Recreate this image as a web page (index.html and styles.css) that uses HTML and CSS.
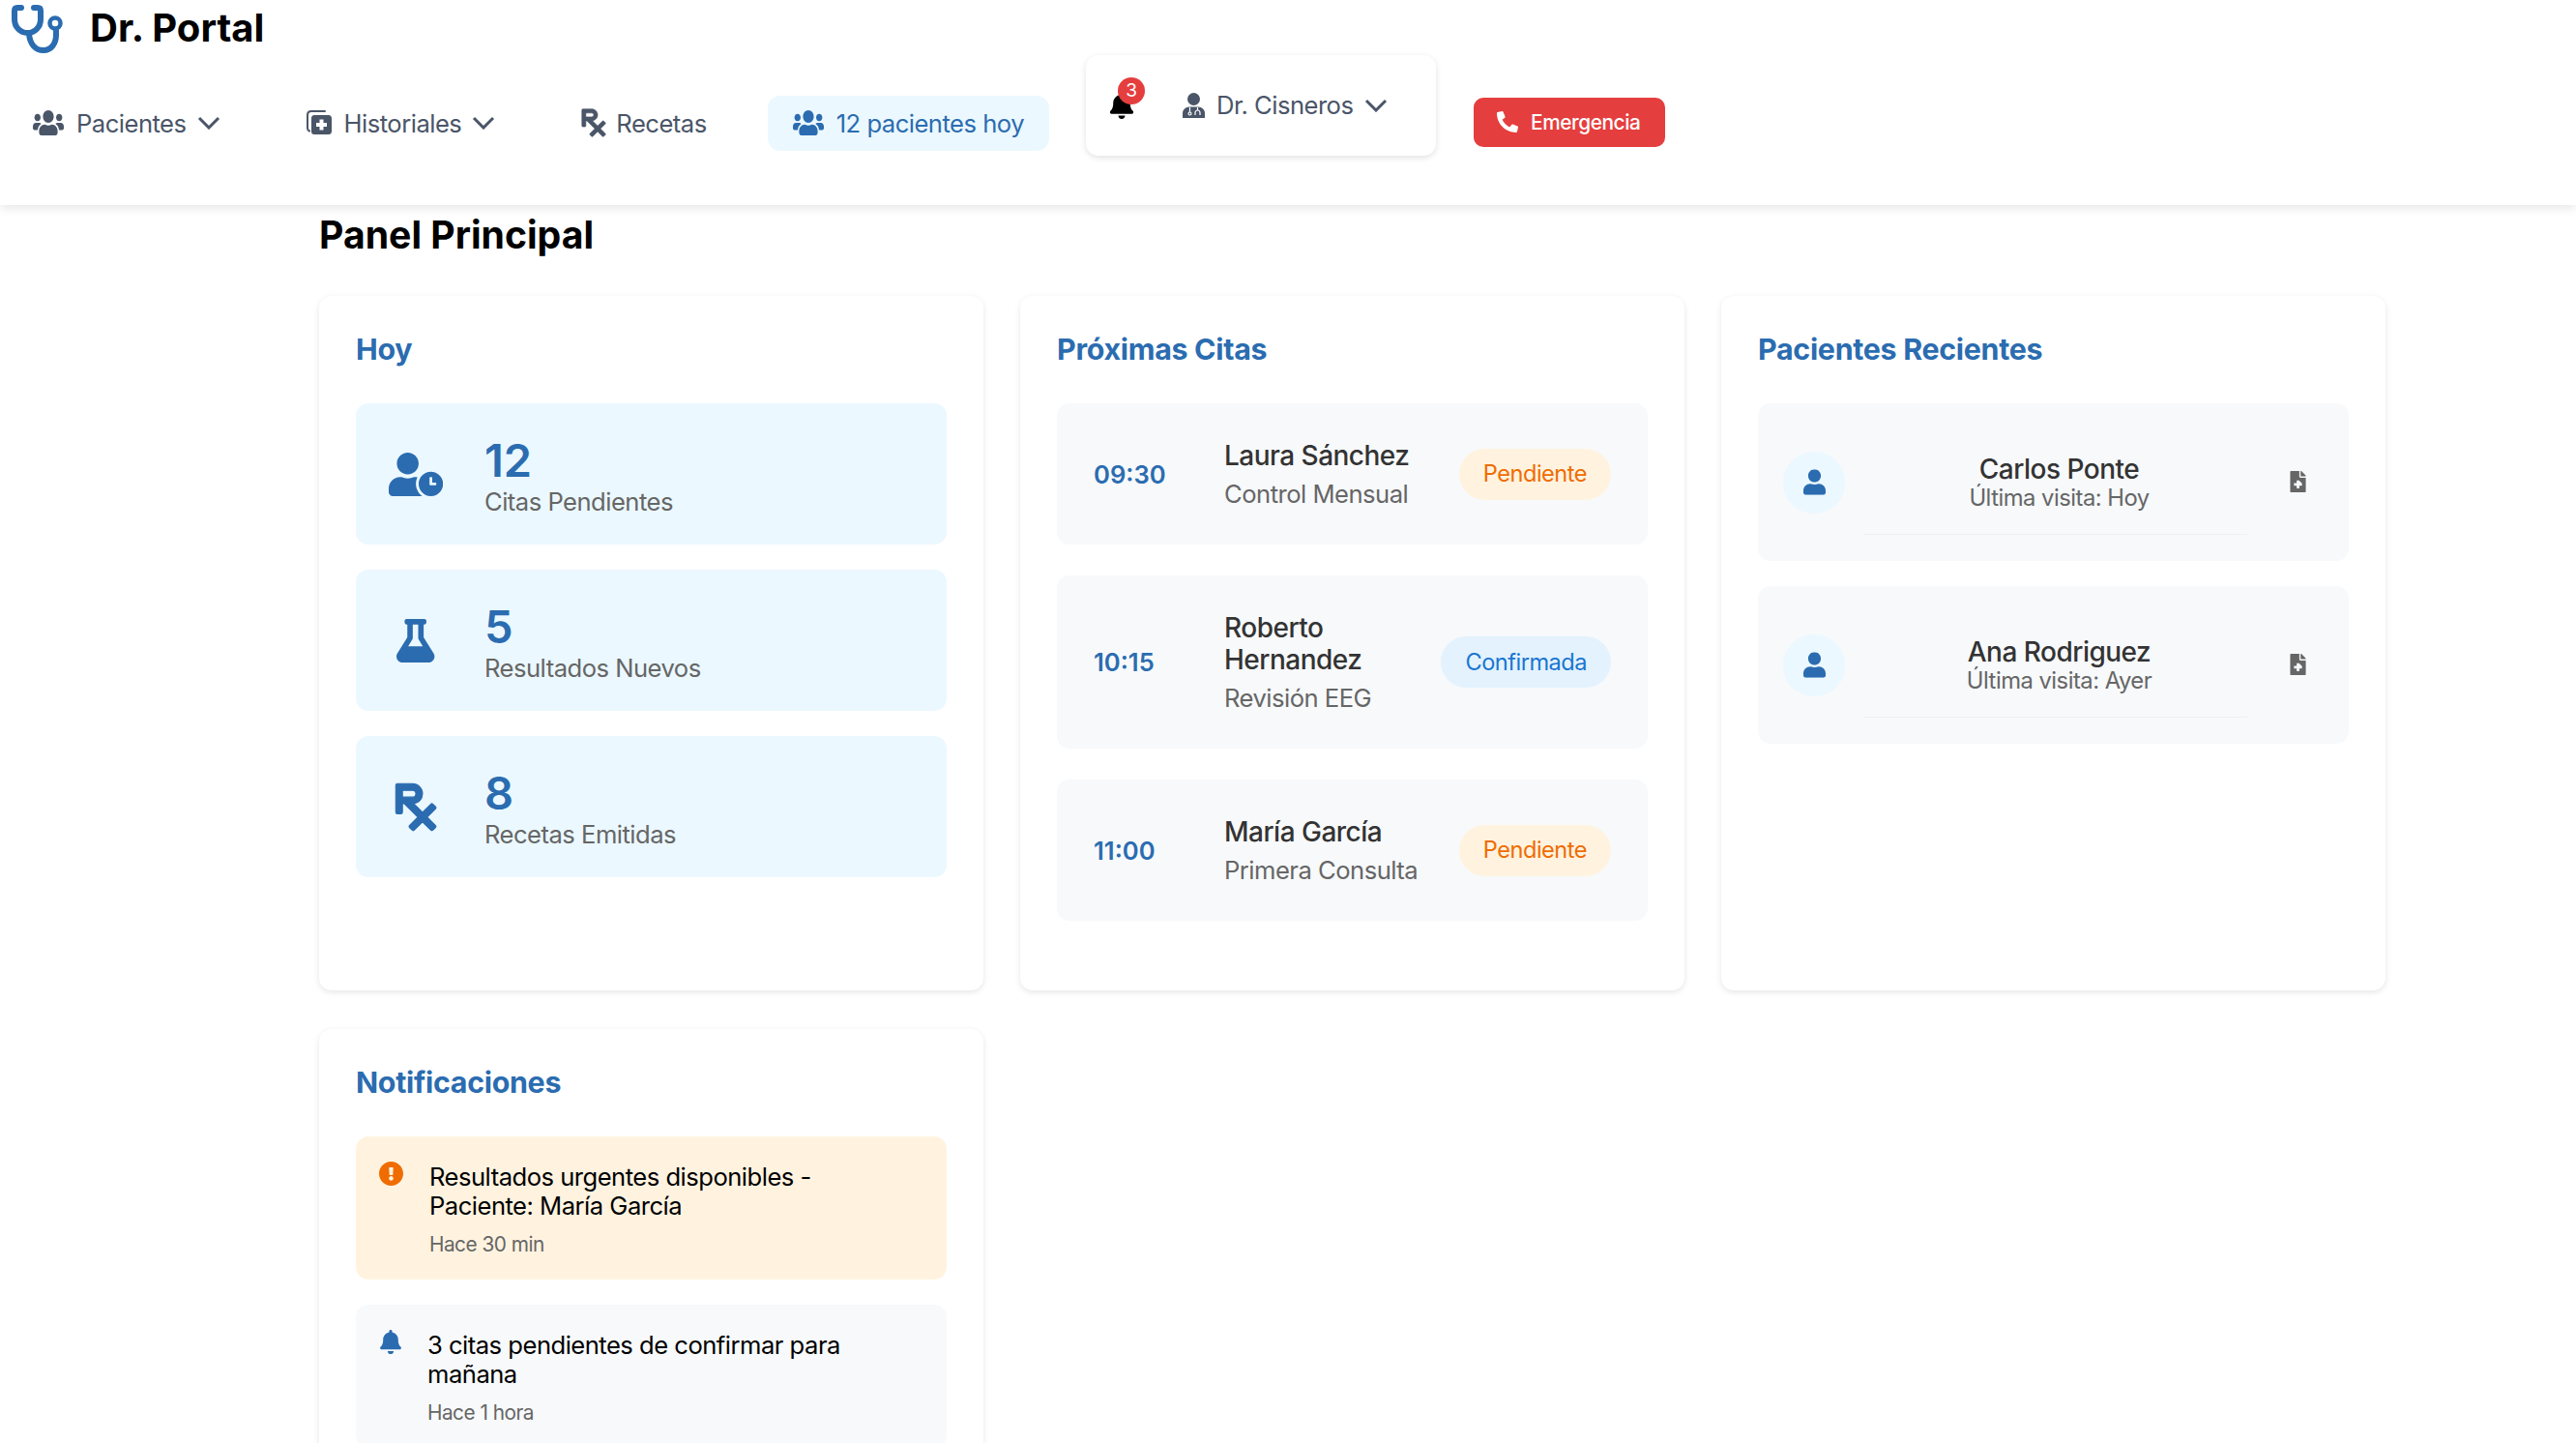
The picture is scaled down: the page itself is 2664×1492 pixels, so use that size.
FILE: index.html
```html
<!DOCTYPE html>
<html lang="es">
<head>
    <meta charset="UTF-8">
    <meta name="viewport" content="width=device-width, initial-scale=1.0">
    <title>Dr. Portal</title>
    <link rel="stylesheet" href="styles.css">
</head>
<body>
    <header class="header">
        <div class="logo">
            <svg class="logo-icon" viewBox="0 0 53 54" fill="none" stroke="#2b6cb0" stroke-width="6" stroke-linecap="round" stroke-linejoin="round">
                <path d="M10 6H6C4 6 3 7 3 9V18C3 26 9 32 16.500 32C24 32 30 26 30 18V9C30 7 29 6 27 6H23"/>
                <path d="M18 33C19 44 25 50 33 50C41 50 46 43 46 34V30"/>
                <circle cx="45" cy="22" r="5.500" stroke-width="4.500"/>
            </svg>
            <span class="logo-text">Dr. Portal</span>
        </div>
        <nav class="nav">
            <a class="nav-item">
                <svg class="icon nav-icon-wide" viewBox="0 32 640 448" preserveAspectRatio="none"><use href="#i-users" width="640" height="512"/></svg>
                <span>Pacientes</span>
                <svg class="chevron" viewBox="0 0 24 14"><polyline points="2,2 12,12 22,2"/></svg>
            </a>
            <a class="nav-item">
                <svg class="icon nav-icon" viewBox="0 0 26 26">
                    <path d="M3 21.500C2 21 1 20 1 18.500V5C1 2.500 2.500 1 5 1H19" fill="none" stroke="currentColor" stroke-width="2" stroke-linecap="round"/>
                    <path d="M8 5H23C24.500 5 26 6.500 26 8V22C26 24 24.500 25 23 25H8C6 25 5 24 5 22V8C5 6.500 6 5 8 5ZM13.500 9.500V13H10V17H13.500V20.500H17.500V17H21V13H17.500V9.500Z" fill-rule="evenodd"/>
                </svg>
                <span>Historiales</span>
                <svg class="chevron" viewBox="0 0 24 14"><polyline points="2,2 12,12 22,2"/></svg>
            </a>
            <a class="nav-item nav-item-rx">
                <svg class="icon nav-rx rx-icon" viewBox="-12 20 408 472"><use href="#i-rx" width="384" height="512"/></svg>
                <span>Recetas</span>
            </a>
            <a class="nav-item active">
                <svg class="icon nav-icon-wide" viewBox="0 32 640 448" preserveAspectRatio="none"><use href="#i-users" width="640" height="512"/></svg>
                <span>12 pacientes hoy</span>
            </a>
            <div class="user-box">
                <div class="bell">
                    <svg class="icon bell-icon" viewBox="0 0 448 512"><use href="#i-bell" width="448" height="512"/></svg>
                    <span class="bell-count">3</span>
                </div>
                <svg class="icon doctor-icon" viewBox="0 0 23 26">
                    <circle cx="11.500" cy="6.500" r="6.500"/>
                    <path d="M0 26V21C0 17.500 3 14.500 7 14.500H16C20 14.500 23 17.500 23 21V26Z"/>
                    <path d="M7.500 15V20M15.500 15V18" fill="none" stroke="#fff" stroke-width="1.200"/>
                    <circle cx="7.500" cy="21.500" r="1.500" fill="none" stroke="#fff" stroke-width="1.200"/>
                    <path d="M13 23V20.500C13 19 14.500 18 15.500 18C16.500 18 18 19 18 20.500V23" fill="none" stroke="#fff" stroke-width="1.200"/>
                </svg>
                <span class="user-name">Dr. Cisneros</span>
                <svg class="chevron" viewBox="0 0 24 14"><polyline points="2,2 12,12 22,2"/></svg>
            </div>
            <button class="emergency">
                <svg class="icon phone-icon" viewBox="0 0 512 512">
                    <path d="M497.390 361.800l-112-48a24 24 0 0 0-28 6.900l-49.600 60.600A370.660 370.660 0 0 1 130.600 204.110l60.600-49.600a23.940 23.940 0 0 0 6.900-28l-48-112A24.160 24.160 0 0 0 122.600.610l-104 24A24 24 0 0 0 0 48c0 256.500 207.900 464 464 464a24 24 0 0 0 23.400-18.600l24-104a24.290 24.290 0 0 0-14.010-27.600z"/>
                </svg>
                Emergencia
            </button>
        </nav>
    </header>

    <main class="main">
        <h2 class="page-title">Panel Principal</h2>
        <div class="grid">
            <section class="card">
                <h3>Hoy</h3>
                <div class="stat">
                    <div class="stat-icon"><svg class="icon" viewBox="0 0 640 512"><path d="M496 224c-79.600 0-144 64.400-144 144s64.400 144 144 144 144-64.400 144-144-64.400-144-144-144zm64 150.300c0 5.300-4.400 9.700-9.700 9.700h-60.600c-5.300 0-9.700-4.400-9.700-9.700v-76.600c0-5.300 4.400-9.700 9.700-9.700h12.600c5.300 0 9.700 4.400 9.700 9.700V352h38.300c5.300 0 9.700 4.400 9.700 9.700v12.600zM320 368c0-27.800 6.700-54.100 18.200-77.500-8-1.500-16.200-2.500-24.600-2.500h-16.700c-22.200 10.200-46.900 16-72.900 16s-50.600-5.800-72.900-16h-16.700C60.200 288 0 348.200 0 422.400V464c0 26.500 21.500 48 48 48h347.100c-45.300-31.900-75.100-84.500-75.100-144zm-96-112c70.700 0 128-57.300 128-128S294.700 0 224 0 96 57.300 96 128s57.300 128 128 128z"/></svg></div>
                    <div>
                        <div class="stat-num">12</div>
                        <div class="stat-label">Citas Pendientes</div>
                    </div>
                </div>
                <div class="stat">
                    <div class="stat-icon"><svg class="icon" viewBox="0 0 448 512"><path d="M437.200 403.500L320 215V64h8c13.300 0 24-10.700 24-24V24c0-13.300-10.700-24-24-24H120c-13.300 0-24 10.700-24 24v16c0 13.300 10.700 24 24 24h8v151L10.800 403.500C-18.500 450.600 15.300 512 70.900 512h306.200c55.700 0 89.400-61.500 60.100-108.500zM137.900 320l48.200-77.600c3.700-5.200 5.800-11.600 5.800-18.400V64h64v160c0 6.900 2.200 13.200 5.800 18.400l48.200 77.600h-172z"/></svg></div>
                    <div>
                        <div class="stat-num">5</div>
                        <div class="stat-label">Resultados Nuevos</div>
                    </div>
                </div>
                <div class="stat">
                    <div class="stat-icon"><svg class="icon rx-icon" viewBox="-12 20 408 472"><use href="#i-rx" width="384" height="512"/></svg></div>
                    <div>
                        <div class="stat-num">8</div>
                        <div class="stat-label">Recetas Emitidas</div>
                    </div>
                </div>
            </section>

            <section class="card">
                <h3>Próximas Citas</h3>
                <div class="appt">
                    <div class="appt-time">09:30</div>
                    <div class="appt-info">
                        <div class="appt-name">Laura Sánchez</div>
                        <div class="appt-type">Control Mensual</div>
                    </div>
                    <span class="badge pending">Pendiente</span>
                </div>
                <div class="appt">
                    <div class="appt-time">10:15</div>
                    <div class="appt-info">
                        <div class="appt-name">Roberto Hernandez</div>
                        <div class="appt-type">Revisión EEG</div>
                    </div>
                    <span class="badge confirmed">Confirmada</span>
                </div>
                <div class="appt">
                    <div class="appt-time">11:00</div>
                    <div class="appt-info">
                        <div class="appt-name">María García</div>
                        <div class="appt-type">Primera Consulta</div>
                    </div>
                    <span class="badge pending">Pendiente</span>
                </div>
            </section>

            <section class="card">
                <h3>Pacientes Recientes</h3>
                <div class="patient">
                    <div class="avatar"><svg class="icon" viewBox="0 0 448 512"><use href="#i-user" width="448" height="512"/></svg></div>
                    <div class="patient-info">
                        <div class="patient-name">Carlos Ponte</div>
                        <div class="patient-visit">Última visita: Hoy</div>
                    </div>
                    <svg class="icon file-icon" viewBox="0 0 384 512"><use href="#i-file" width="384" height="512"/></svg>
                </div>
                <div class="patient">
                    <div class="avatar"><svg class="icon" viewBox="0 0 448 512"><use href="#i-user" width="448" height="512"/></svg></div>
                    <div class="patient-info">
                        <div class="patient-name">Ana Rodriguez</div>
                        <div class="patient-visit">Última visita: Ayer</div>
                    </div>
                    <svg class="icon file-icon" viewBox="0 0 384 512"><use href="#i-file" width="384" height="512"/></svg>
                </div>
            </section>

            <section class="card">
                <h3>Notificaciones</h3>
                <div class="notif urgent">
                    <svg class="icon notif-icon" viewBox="8 8 496 496"><path d="M504 256c0 136.997-111.043 248-248 248S8 392.997 8 256C8 119.083 119.043 8 256 8s248 111.083 248 248zm-248 50c-25.405 0-46 20.595-46 46s20.595 46 46 46 46-20.595 46-46-20.595-46-46-46zm-43.673-165.346l7.418 136c.347 6.364 5.609 11.346 11.982 11.346h48.546c6.373 0 11.635-4.982 11.982-11.346l7.418-136c.375-6.874-5.098-12.654-11.982-12.654h-63.383c-6.884 0-12.356 5.780-11.981 12.654z"/></svg>
                    <div>
                        <p class="notif-text">Resultados urgentes disponibles - Paciente: María García</p>
                        <p class="notif-time">Hace 30 min</p>
                    </div>
                </div>
                <div class="notif">
                    <svg class="icon notif-icon" viewBox="0 0 448 512"><use href="#i-bell" width="448" height="512"/></svg>
                    <div>
                        <p class="notif-text">3 citas pendientes de confirmar para mañana</p>
                        <p class="notif-time">Hace 1 hora</p>
                    </div>
                </div>
            </section>
        </div>
    </main>

    <svg class="icon-defs" aria-hidden="true">
        <symbol id="i-users" viewBox="0 0 640 512"><path d="M96 224c35.300 0 64-28.700 64-64s-28.700-64-64-64-64 28.700-64 64 28.700 64 64 64zm448 0c35.300 0 64-28.700 64-64s-28.700-64-64-64-64 28.700-64 64 28.700 64 64 64zm32 32h-64c-17.600 0-33.500 7.100-45.100 18.600 40.300 22.100 68.900 62 75.100 109.400h66c17.700 0 32-14.300 32-32v-32c0-35.300-28.700-64-64-64zm-256 0c61.900 0 112-50.100 112-112S381.900 32 320 32 208 82.100 208 144s50.100 112 112 112zm76.800 32h-8.300c-20.800 10-43.900 16-68.500 16s-47.600-6-68.500-16h-8.300C179.600 288 128 339.600 128 403.200V432c0 26.500 21.500 48 48 48h288c26.500 0 48-21.500 48-48v-28.800c0-63.600-51.600-115.200-115.200-115.200zm-223.700-13.400C161.500 263.100 145.600 256 128 256H64c-35.300 0-64 28.700-64 64v32c0 17.700 14.300 32 32 32h65.900c6.300-47.400 34.900-87.300 75.200-109.400z"/></symbol>
        <symbol id="i-rx" viewBox="0 0 384 512" overflow="visible"><path d="M301.260 352l78.060-78.060c6.250-6.250 6.250-16.380 0-22.630l-22.630-22.630c-6.250-6.250-16.380-6.250-22.630 0L256 306.740l-83.960-83.960C219.310 216.800 256 176.890 256 128c0-53.020-42.980-96-96-96H16C7.160 32 0 39.160 0 48v256c0 8.840 7.160 16 16 16h32c8.840 0 16-7.160 16-16v-80h18.750l128 128-78.060 78.060c-6.250 6.250-6.250 16.380 0 22.630l22.630 22.630c6.250 6.250 16.380 6.250 22.630 0L256 397.250l78.060 78.060c6.250 6.250 16.380 6.250 22.630 0l22.630-22.630c6.250-6.250 6.250-16.380 0-22.630L301.260 352zM64 96h96c17.640 0 32 14.360 32 32s-14.360 32-32 32H64V96z"/></symbol>
        <symbol id="i-bell" viewBox="0 0 448 512"><path d="M224 512c35.320 0 63.970-28.650 63.970-64H160.030c0 35.350 28.650 64 63.970 64zm215.390-149.710c-19.320-20.760-55.470-51.990-55.470-154.290 0-77.700-54.480-139.900-127.940-155.160V32c0-17.670-14.320-32-31.980-32s-31.980 14.330-31.980 32v20.840C118.560 68.100 64.080 130.300 64.080 208c0 102.300-36.150 133.530-55.470 154.290-6 6.450-8.660 14.160-8.610 21.710.11 16.400 12.980 32 32.100 32h383.800c19.120 0 32-15.600 32.100-32 .05-7.550-2.610-15.270-8.610-21.710z"/></symbol>
        <symbol id="i-user" viewBox="0 0 448 512"><path d="M224 256c70.700 0 128-57.300 128-128S294.700 0 224 0 96 57.300 96 128s57.300 128 128 128zm89.600 32h-16.700c-22.200 10.200-46.900 16-72.900 16s-50.600-5.800-72.900-16h-16.700C60.200 288 0 348.200 0 422.400V464c0 26.500 21.500 48 48 48h352c26.500 0 48-21.500 48-48v-41.600c0-74.200-60.200-134.400-134.400-134.400z"/></symbol>
        <symbol id="i-file" viewBox="0 0 384 512"><path d="M377 105L279.100 7c-4.500-4.500-10.600-7-17-7H256v128h128v-6.100c0-6.300-2.500-12.400-7-16.900zm-153 31V0H24C10.700 0 0 10.700 0 24v464c0 13.300 10.700 24 24 24h336c13.300 0 24-10.700 24-24V160H248c-13.200 0-24-10.800-24-24zm64 160v48c0 4.400-3.600 8-8 8h-56v56c0 4.400-3.600 8-8 8h-48c-4.400 0-8-3.600-8-8v-56h-56c-4.400 0-8-3.600-8-8v-48c0-4.400 3.600-8 8-8h56v-56c0-4.400 3.600-8 8-8h48c4.400 0 8 3.600 8 8z"/></symbol>
    </svg>
</body>
</html>
```

FILE: styles.css
```css
* {
    box-sizing: border-box;
}
html, body {
    height: 100%;
    overflow: hidden;
}
body {
    margin: 0;
    background: #fff;
    color: #000;
    font-family: Inter, "Noto Sans", sans-serif;
    font-size: 25.6px;
    letter-spacing: -0.02em;
}
.icon {
    display: block;
    fill: currentColor;
    flex-shrink: 0;
}
.icon-defs {
    display: none;
}
.rx-icon {
    stroke: currentColor;
    stroke-width: 10;
}

/* header */
.header {
    height: 212px;
    background: #fff;
    box-shadow: 0 3px 10px rgba(0,0,0,0.1);
    padding: 0 8px;
    position: relative;
}
.logo {
    display: flex;
    align-items: center;
    height: 57px;
    padding-left: 4px;
    gap: 28px;
}
.logo-icon {
    width: 53px;
    height: 54px;
}
.logo-text {
    font-size: 40px;
    font-weight: 700;
    letter-spacing: 0;
}
.nav {
    display: flex;
    align-items: center;
    gap: 37px;
}
.nav-item {
    display: flex;
    align-items: center;
    gap: 13px;
    height: 57px;
    padding: 0 26px;
    border-radius: 13px;
    color: #4a5568;
}
.nav-item-rx {
    gap: 10px;
}
.nav-item.active {
    background: #ebf8ff;
    color: #2b6cb0;
}
.nav-item .chevron {
    margin-left: -2px;
}
.nav-icon-wide {
    width: 32px;
    height: 26px;
}
.nav-icon {
    width: 26px;
    height: 26px;
}
.nav-rx {
    width: 26px;
    height: 30px;
}
.chevron {
    width: 24px;
    height: 14px;
    fill: none;
    stroke: currentColor;
    stroke-width: 3;
    flex-shrink: 0;
}
.user-box {
    display: flex;
    align-items: center;
    width: 362px;
    height: 104px;
    margin-bottom: 36px;
    margin-left: 1px;
    padding: 0 24px;
    border-radius: 13px;
    box-shadow: 0 2px 6px rgba(0,0,0,0.12);
    color: #4a5568;
}
.bell {
    position: relative;
    width: 26px;
    margin-right: 50px;
    color: #000;
}
.bell-icon {
    width: 26px;
    height: 28px;
}
.bell-count {
    position: absolute;
    top: -15px;
    left: 9px;
    width: 28px;
    height: 28px;
    border-radius: 50%;
    background: #e53e3e;
    color: #fff;
    font-size: 19px;
    letter-spacing: 0;
    line-height: 28px;
    text-align: center;
}
.doctor-icon {
    width: 23px;
    height: 26px;
    margin-right: 12px;
}
.user-name {
    margin-right: 12px;
    position: relative;
    top: -1px;
}
.emergency {
    display: flex;
    align-items: center;
    gap: 13px;
    width: 198px;
    height: 51px;
    margin-bottom: 2px;
    margin-left: 2px;
    padding: 0 24px;
    border: 0;
    border-radius: 10px;
    background: #e53e3e;
    color: #fff;
    font-family: inherit;
    font-size: 20.8px;
    font-weight: 500;
    letter-spacing: -0.02em;
}
.phone-icon {
    width: 22px;
    height: 22px;
}

/* main */
.main {
    padding: 0 197px 0 330px;
}
.page-title {
    margin: 0;
    padding-top: 8px;
    height: 94px;
    font-size: 39.2px;
    font-weight: 700;
    letter-spacing: 0;
    line-height: 46px;
}
.grid {
    display: grid;
    grid-template-columns: repeat(3, 1fr);
    grid-auto-rows: 718px;
    gap: 40px 38px;
}
.card {
    padding: 35px 38px 38px;
    border-radius: 13px;
    background: #fff;
    box-shadow: 0 2px 6px rgba(0,0,0,0.1);
}
.card h3 {
    margin: 0 0 36px;
    color: #2b6cb0;
    font-size: 30.4px;
    font-weight: 700;
    letter-spacing: -0.01em;
    line-height: 40px;
}

/* stats */
.stat {
    display: flex;
    align-items: center;
    height: 146px;
    margin-bottom: 26px;
    padding-left: 32px;
    border-radius: 13px;
    background: #ebf8ff;
    color: #2b6cb0;
}
.stat-icon {
    display: flex;
    justify-content: center;
    width: 60px;
    margin-right: 41px;
}
.stat-icon .icon {
    height: 45px;
}
.stat-icon .rx-icon {
    height: 51px;
}
.stat-num {
    margin-top: 6px;
    font-size: 47px;
    font-weight: 600;
    letter-spacing: 0;
    line-height: 48px;
}
.stat-label {
    margin-top: 3px;
    color: #666;
    line-height: 32px;
}

/* citas */
.appt {
    display: flex;
    align-items: center;
    margin-bottom: 32px;
    padding: 36px 38px;
    border-radius: 13px;
    background: #f7f9fb;
}
.appt-time {
    width: 135px;
    flex-shrink: 0;
    color: #2b6cb0;
    font-weight: 600;
    letter-spacing: 0;
}
.appt-info {
    flex: 1;
    min-width: 0;
    padding-top: 2px;
    margin-bottom: -2px;
}
.appt-name {
    color: #333;
    font-size: 28px;
    font-weight: 500;
    line-height: 33px;
}
.appt-type {
    margin-top: 5px;
    color: #666;
    line-height: 36px;
}
.badge {
    flex-shrink: 0;
    padding: 10.5px 25px;
    border-radius: 27px;
    font-size: 23.6px;
    line-height: 32px;
}
.pending {
    background: #fff3e0;
    color: #ef6c00;
}
.confirmed {
    background: #e3f2fd;
    color: #1976d2;
}

/* pacientes */
.patient {
    display: flex;
    align-items: center;
    height: 163px;
    margin-bottom: 26px;
    padding: 0 24px 0 26px;
    border-radius: 13px;
    background: #f7f9fb;
}
.avatar {
    display: flex;
    align-items: center;
    justify-content: center;
    width: 64px;
    height: 64px;
    flex-shrink: 0;
    margin-right: 19px;
    border-radius: 50%;
    background: #ebf8ff;
    color: #2b6cb0;
}
.avatar .icon {
    width: 23px;
    height: 27px;
}
.patient-info {
    flex: 1;
    margin: 0 44px 0 0;
    padding: 24px 0 23px 8px;
    border-bottom: 1px solid #edf0f4;
    text-align: center;
}
.patient-name {
    color: #333;
    font-size: 28px;
    font-weight: 500;
    line-height: 33px;
}
.patient-visit {
    margin-top: -1px;
    color: #666;
    font-size: 23.8px;
    line-height: 28px;
}
.file-icon {
    width: 17px;
    height: 22px;
    margin-right: 20px;
    margin-bottom: 2px;
    color: #666;
}

/* notificaciones */
.notif {
    display: flex;
    margin-bottom: 26px;
    padding: 26px 60px 21px 24px;
    border-radius: 13px;
    background: #f7f9fb;
}
.notif.urgent {
    background: #fff3e0;
}
.notif-icon {
    width: 24px;
    height: 25px;
    margin-right: 26px;
    color: #2b6cb0;
}
.urgent .notif-icon {
    width: 25px;
    margin-right: 27px;
    color: #ef6c00;
}
.notif-text {
    margin: 0;
    padding-top: 1px;
    line-height: 30px;
}
.notif-time {
    margin: 10px 0 0;
    color: #666;
    font-size: 20.8px;
    line-height: 30px;
}
```
